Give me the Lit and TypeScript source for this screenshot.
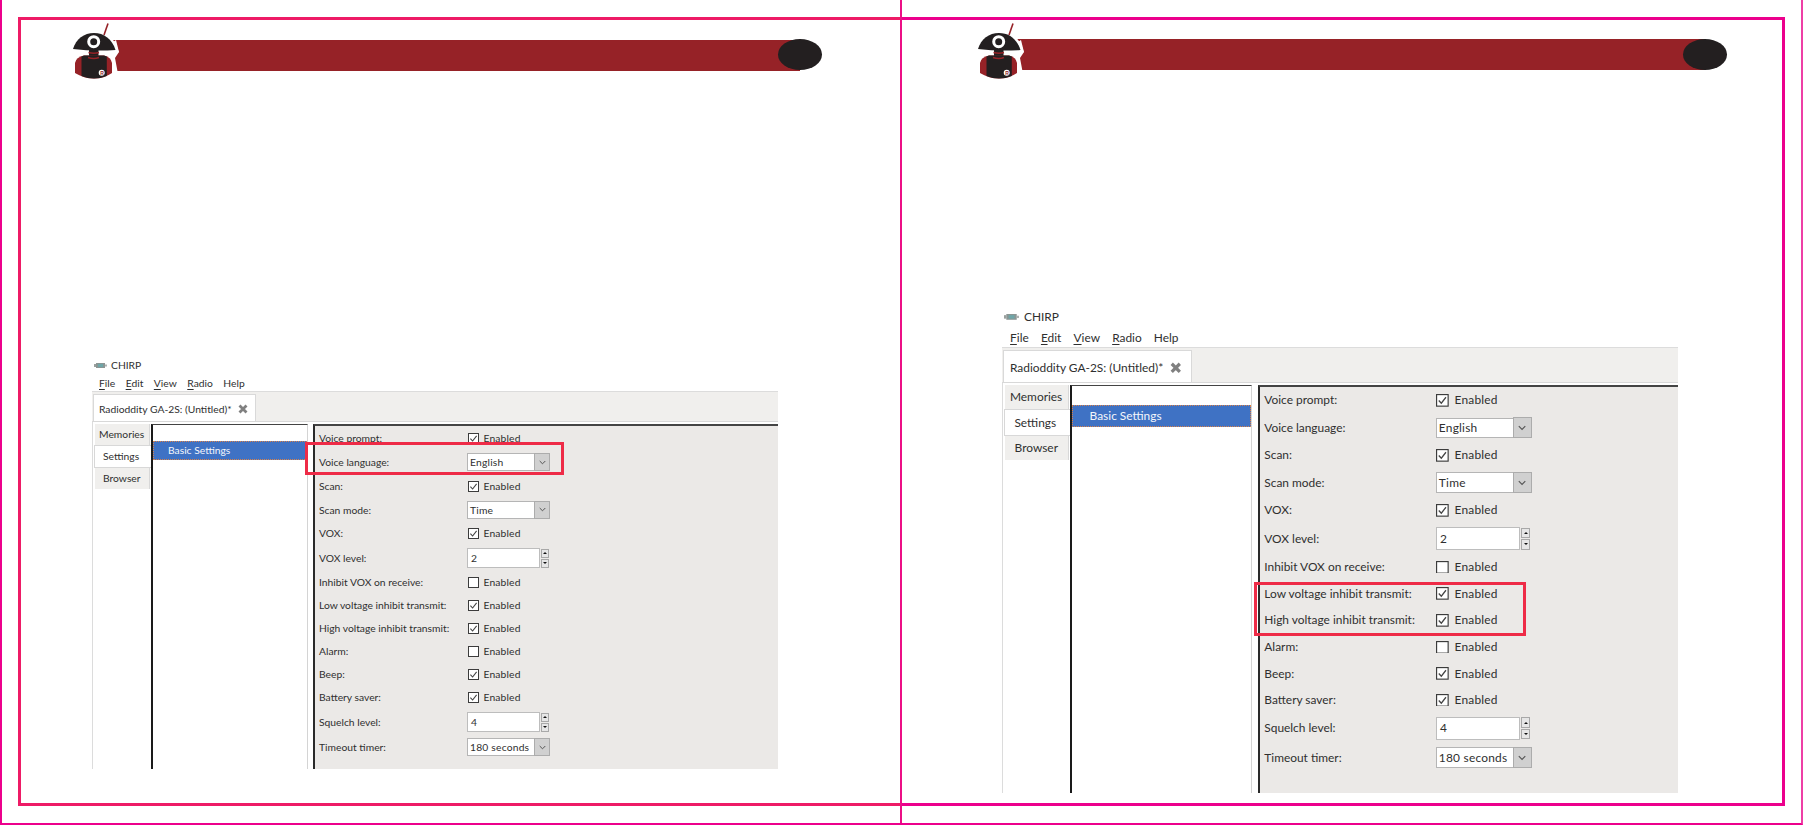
import { LitElement, html, css, svg } from "lit";
import { customElement, property } from "lit/decorators.js";

type Row = { label: string; kind: "check" | "select" | "spin"; on?: boolean; value?: string };

const ROWS: Row[] = [
  { label: "Voice prompt:", kind: "check", on: true },
  { label: "Voice language:", kind: "select", value: "English" },
  { label: "Scan:", kind: "check", on: true },
  { label: "Scan mode:", kind: "select", value: "Time" },
  { label: "VOX:", kind: "check", on: true },
  { label: "VOX level:", kind: "spin", value: "2" },
  { label: "Inhibit VOX on receive:", kind: "check", on: false },
  { label: "Low voltage inhibit transmit:", kind: "check", on: true },
  { label: "High voltage inhibit transmit:", kind: "check", on: true },
  { label: "Alarm:", kind: "check", on: false },
  { label: "Beep:", kind: "check", on: true },
  { label: "Battery saver:", kind: "check", on: true },
  { label: "Squelch level:", kind: "spin", value: "4" },
  { label: "Timeout timer:", kind: "select", value: "180 seconds" },
];

@customElement("chirp-window")
class ChirpWindow extends LitElement {
  @property({ type: Array }) box: number[] = [0, 0, 0, 0];

  static styles = css`
    :host { display: block; }
    .win {
      position: relative; width: 686px; height: 414px; display: flex; flex-direction: column;
      overflow: hidden; background: #fff; color: #2f2f2f; white-space: nowrap;
      font: 10.3px/1 Lato, "Noto Sans", sans-serif;
    }
    :host(.large) .win { zoom: 1.157; width: 584px; height: 421px; }
    .title { height: 18px; flex: none; display: flex; align-items: center; gap: 4px; padding: 2px 0 0 2px; box-sizing: border-box; }
    .menu { height: 18px; flex: none; box-sizing: border-box; display: flex; align-items: center; gap: 10.5px; padding: 2px 0 0 7px; }
    .menu u { text-underline-offset: 1.5px; }
    .tabbar { height: 30px; flex: none; box-sizing: border-box; border-top: 1px solid #dcdcdc; background: #f0efed; padding: 2px 0 0 1px; }
    .tab {
      width: 163px; height: 27px; box-sizing: border-box; background: #fff; border: 1px solid #d9d9d9; border-bottom: 0;
      display: flex; align-items: center; gap: 6px; padding: 2px 0 0 5px;
    }
    .body { flex: 1; display: flex; min-height: 0; border-top: 1px solid #d8d8d8; }
    .side { width: 59px; flex: none; box-sizing: border-box; border-left: 1px solid #dcdcdc; padding-top: 2px; display: flex; flex-direction: column; }
    .vt { height: 21px; margin-left: 2px; width: 55px; box-sizing: border-box; background: #f0efed; border-right: 1px solid #d8d8d8; display: flex; align-items: center; padding-left: 4px; }
    .vt.on { height: 23px; margin-left: 1px; width: 57px; background: #fff; border: 1px solid #d8d8d8; border-right: 0; padding-left: 8px; }
    .vt.last { padding-left: 8px; }
    .tree { width: 157px; flex: none; box-sizing: border-box; margin-top: 2px; border-left: 2px solid #1a1a1a; border-top: 1px solid #444; border-right: 1px solid #d4d4d4; padding-top: 16px; }
    .node { height: 19px; box-sizing: border-box; background: #3f72c4; color: #f4f6fb; outline: 1px dotted #d9824a; outline-offset: -1px; display: flex; align-items: center; padding-left: 15px; }
    .gap { width: 5px; flex: none; }
    .panel { flex: 1; min-width: 0; margin-top: 2px; box-sizing: border-box; border-left: 2px solid #2a2a2a; border-top: 2px solid #444; background: #ebe9e7; padding: 1px 0 0 4px; display: flex; flex-direction: column; }
    :host(.large) .panel { padding-top: 0; }
    .row { display: flex; align-items: center; flex: none; height: 23px; }
    .row.select { height: 24.5px; }
    .row.spin { height: 26px; }
    .label { width: 148px; flex: none; }
    .cb { display: flex; align-items: center; gap: 5px; margin-left: .5px; letter-spacing: .15px; }
    .box { width: 11px; height: 11px; display: block; }
    .sel { width: 83px; height: 18px; box-sizing: border-box; display: flex; background: #fff; border: 1px solid #b5b5b5; }
    .sel span { flex: 1; padding-left: 2px; align-self: center; letter-spacing: .2px; }
    .arrow { width: 16px; flex: none; box-sizing: border-box; background: #d0d0d0; border: 1px solid #acacac; display: flex; align-items: center; justify-content: center; margin: -1px -1px -1px 0; }
    .spinner { display: flex; align-items: center; gap: 1px; }
    .num { width: 73px; height: 20px; box-sizing: border-box; background: #fff; border: 1px solid #bdbdbd; display: flex; align-items: center; padding-left: 3px; }
    .btns { width: 8px; display: flex; flex-direction: column; gap: 1px; }
    .btns div { height: 9px; box-sizing: border-box; background: #e6e6e6; border: 1px solid #a8a8a8; display: flex; align-items: center; justify-content: center; }
    .up { width: 0; height: 0; border: 2px solid transparent; border-top: 0; border-bottom: 2.5px solid #111; }
    .down { width: 0; height: 0; border: 2px solid transparent; border-bottom: 0; border-top: 2.5px solid #111; }
    .mark { position: absolute; box-sizing: border-box; border: 3px solid #ee2b47; }
    :host(.large) .mark { border-width: 2.6px; }
  `;

  private control(r: Row) {
    if (r.kind === "check") {
      return html`<div class="cb">
        <svg class="box" viewBox="0 0 11 11">
          <rect x=".5" y=".5" width="10" height="10" fill="#fff" stroke="#3c3c3c"></rect>
          ${r.on ? svg`<path d="M2.4 5.6 4.6 8l4-5.2" fill="none" stroke="#444" stroke-width="1.1"></path>` : ""}
        </svg>
        <span>Enabled</span>
      </div>`;
    }
    if (r.kind === "select") {
      return html`<div class="sel">
        <span>${r.value}</span>
        <div class="arrow">
          <svg width="7" height="5" viewBox="0 0 7 5"><path d="M.7 1 3.5 3.8 6.3 1" fill="none" stroke="#555" stroke-width="1"></path></svg>
        </div>
      </div>`;
    }
    return html`<div class="spinner">
      <div class="num">${r.value}</div>
      <div class="btns"><div><i class="up"></i></div><div><i class="down"></i></div></div>
    </div>`;
  }

  render() {
    const [x, y, w, h] = this.box;
    return html`<div class="win">
      <div class="title">
        <svg width="13" height="5" viewBox="0 0 13 5">
          <rect width="2" height="3" y="1" fill="#9aa09e"></rect>
          <rect x="2" width="9" height="5" fill="#8b9694"></rect>
          <rect x="4" y="1" width="5" height="3" fill="#6ea6a8"></rect>
          <rect x="11" y="1.5" width="2" height="2" fill="#aeb2b1"></rect>
        </svg>
        <span>CHIRP</span>
      </div>
      <div class="menu">
        <span><u>F</u>ile</span><span><u>E</u>dit</span><span><u>V</u>iew</span><span><u>R</u>adio</span><span>Help</span>
      </div>
      <div class="tabbar">
        <div class="tab">
          <span>Radioddity GA-2S: (Untitled)*</span>
          <svg width="10" height="10" viewBox="0 0 10 10"><path d="M1.5 1.5 8.5 8.5M8.5 1.5 1.5 8.5" stroke="#808080" stroke-width="2.8"></path></svg>
        </div>
      </div>
      <div class="body">
        <div class="side">
          <div class="vt">Memories</div>
          <div class="vt on">Settings</div>
          <div class="vt last">Browser</div>
        </div>
        <div class="tree"><div class="node">Basic Settings</div></div>
        <div class="gap"></div>
        <div class="panel">
          ${ROWS.map(
            (r) => html`<div class="row ${r.kind}"><div class="label">${r.label}</div>${this.control(r)}</div>`
          )}
        </div>
      </div>
      <div class="mark" style="left:${x}px;top:${y}px;width:${w}px;height:${h}px"></div>
    </div>`;
  }
}

@customElement("robot-mark")
class RobotMark extends LitElement {
  static styles = css`
    :host { display: block; width: 54px; height: 62px; flex: none; position: relative; z-index: 1; }
    svg { display: block; }
  `;
  render() {
    const dome = "M73 49C76 39 84 33 94 33C104 33 112 39 115.5 50Q94 51.5 73 49Z";
    const body = "M75 63Q76 57 84 55.5H104Q111 57 112 63V73Q104 78.5 94 78.5Q84 78.5 75 73Z";
    return html`<svg width="54" height="62" viewBox="70 20 54 62">
      <path d="M110 44 116 40 119 52 115 58 118 74H110Z" fill="#fff"></path>
      <path d=${body} fill="#fff" stroke="#fff" stroke-width="6"></path>
      <path d=${dome} fill="#fff" stroke="#fff" stroke-width="5"></path>
      <path d="M108 23.5 104 35" stroke="#962227" stroke-width="1.6"></path>
      <path d=${dome} fill="#231f20"></path>
      <circle cx="93.7" cy="41.7" r="5" fill="#231f20" stroke="#fff" stroke-width="3"></circle>
      <rect x="89" y="50" width="9.5" height="8" fill="#231f20"></rect>
      <path d=${body} fill="#962227"></path>
      <path d="M81.5 56.5 84 55.5H104L106.8 56.5V76Q100 78.5 94 78.5Q88 78.5 81.5 76Z" fill="#231f20"></path>
      <path d="M88.5 52.5Q94 54 99 52.5M88 57.5Q94 59.5 99 57.5" fill="none" stroke="#962227" stroke-width="1.4"></path>
      <circle cx="101.7" cy="72.7" r="3" fill="#fff"></circle>
      <text x="100.2" y="74.8" font-size="5" font-weight="700" font-family="Liberation Sans" fill="#962227">R</text>
    </svg>`;
  }
}

@customElement("app-root")
export class AppRoot extends LitElement {
  static styles = css`
    :host { display: block; width: 1803px; height: 826px; background: #fff; overflow: hidden; }
    .sheet {
      width: 1803px; height: 825px; box-sizing: border-box; display: flex; background: #fff;
      border-left: 2px solid #ec008c; border-right: 2px solid #ee3fa6; border-bottom: 2px solid #ec008c;
    }
    .page { box-sizing: border-box; padding-top: 17px; padding-bottom: 17px; }
    .left { width: 900px; padding-left: 16px; border-right: 2px solid #ec0f86; }
    .right { flex: 1; padding-right: 16px; }
    .trim { box-sizing: border-box; height: 100%; border-style: solid; }
    .left .trim { border-color: #ee1b66; border-width: 3px 0 3px 3px; padding-left: 49px; }
    .right .trim { border-color: #ec008c; border-width: 3px 3px 3px 0; padding-left: 73px; }
    .head { display: flex; align-items: flex-start; }
    .band { width: 690px; height: 31px; margin: 20px 0 0 -14px; background: #962227; position: relative; }
    .dot { position: absolute; right: -21.5px; top: -1px; width: 44px; height: 31px; border-radius: 50%; background: #231f20; }
    .right .band { margin-top: 19px; }
    .right .dot { top: 0; }
    .left chirp-window { margin: 273px 0 0 22px; }
    .right chirp-window { margin: 223.5px 0 0 27px; }
  `;
  render() {
    const head = html`<div class="head"><robot-mark></robot-mark><div class="band"><div class="dot"></div></div></div>`;
    return html`<div class="sheet">
      <section class="page left">
        <div class="trim">
          ${head}
          <chirp-window .box=${[213, 87, 259, 33]}></chirp-window>
        </div>
      </section>
      <section class="page right">
        <div class="trim">
          ${head}
          <chirp-window class="large" .box=${[218, 239, 235, 47]}></chirp-window>
        </div>
      </section>
    </div>`;
  }
}
